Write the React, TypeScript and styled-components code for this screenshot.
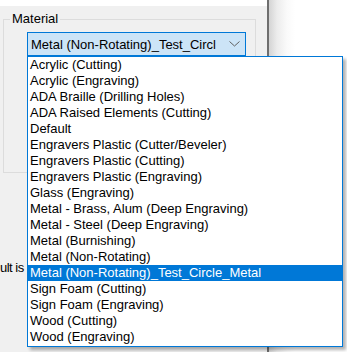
import React from "react";
import styled, { createGlobalStyle } from "styled-components";

const Global = createGlobalStyle`
  html, body { margin: 0; padding: 0; background: #ffffff; overflow: hidden; }
  body { font-family: "Liberation Sans", Arial, sans-serif; }
`;

const Screen = styled.div`
  display: flex;
  width: 347px;
  height: 352px;
`;

const Dialog = styled.div`
  width: 267px;
  flex: none;
  display: flex;
  flex-direction: column;
  background: #f0f0f0;
  border-right: 2px solid #6e6e6e;
`;

const TopStrip = styled.div`
  height: 6px;
  background: #ffffff;
`;

const Body = styled.div`
  display: flex;
  flex-direction: column;
  padding: 5px 0 0 3px;
`;

const Group = styled.fieldset`
  box-sizing: border-box;
  margin: 0;
  padding: 0;
  width: 253px;
  height: 162px;
  border: 1px solid #dcdcdc;
  min-width: 0;
`;

const Legend = styled.legend`
  margin-left: 6px;
  padding: 0 2px;
  font-size: 13px;
  line-height: 16px;
  color: #000;
`;

const ComboWrap = styled.div`
  position: relative;
  width: 219px;
  margin: 5px 0 0 23px;
`;

const Combo = styled.div`
  box-sizing: border-box;
  height: 24px;
  display: flex;
  align-items: center;
  justify-content: space-between;
  padding: 0 5px 0 3px;
  border: 1px solid #0078d7;
  background: #cce4f7;
  font-size: 13px;
  color: #000;
  white-space: nowrap;
`;

const List = styled.ul`
  position: absolute;
  top: 24px;
  left: 0;
  z-index: 2;
  box-sizing: border-box;
  width: 316px;
  height: 291px;
  margin: 0;
  padding: 0;
  list-style: none;
  background: #ffffff;
  border: 1px solid #0078d7;
  box-shadow: 3px 3px 3px rgba(0, 0, 0, 0.3);
`;

const Item = styled.li<{ $selected?: boolean }>`
  height: 16px;
  line-height: 16px;
  padding-left: 2px;
  font-size: 13px;
  white-space: nowrap;
  color: ${(p) => (p.$selected ? "#ffffff" : "#000000")};
  background: ${(p) => (p.$selected ? "#0078d7" : "transparent")};
`;

const Caption = styled.div`
  margin: 87px 0 0 -3px;
  font-size: 13px;
  line-height: 16px;
  letter-spacing: -0.5px;
  color: #000;
  white-space: nowrap;
`;

const Backdrop = styled.div`
  flex: 1;
  background: linear-gradient(to right, #d4d4d4 0px, #ececec 8px, #fafafa 18px, #ffffff 26px);
`;

const items = [
  "Acrylic (Cutting)",
  "Acrylic (Engraving)",
  "ADA Braille (Drilling Holes)",
  "ADA Raised Elements (Cutting)",
  "Default",
  "Engravers Plastic (Cutter/Beveler)",
  "Engravers Plastic (Cutting)",
  "Engravers Plastic (Engraving)",
  "Glass (Engraving)",
  "Metal - Brass, Alum (Deep Engraving)",
  "Metal - Steel (Deep Engraving)",
  "Metal (Burnishing)",
  "Metal (Non-Rotating)",
  "Metal (Non-Rotating)_Test_Circle_Metal",
  "Sign Foam (Cutting)",
  "Sign Foam (Engraving)",
  "Wood (Cutting)",
  "Wood (Engraving)",
];

const selected = "Metal (Non-Rotating)_Test_Circle_Metal";

const Chevron = () => (
  <svg width="11" height="6" viewBox="0 0 11 6">
    <path d="M0.5 0.5 L5.5 5 L10.5 0.5" fill="none" stroke="#606060" strokeWidth="1" />
  </svg>
);

export default function App() {
  return (
    <Screen>
      <Global />
      <Dialog>
        <TopStrip />
        <Body>
          <Group>
            <Legend>Material</Legend>
            <ComboWrap>
              <Combo>
                <span>Metal (Non-Rotating)_Test_Circl</span>
                <Chevron />
              </Combo>
              <List>
                {items.map((it) => (
                  <Item key={it} $selected={it === selected}>
                    {it}
                  </Item>
                ))}
              </List>
            </ComboWrap>
          </Group>
          <Caption>ult is</Caption>
        </Body>
      </Dialog>
      <Backdrop />
    </Screen>
  );
}
